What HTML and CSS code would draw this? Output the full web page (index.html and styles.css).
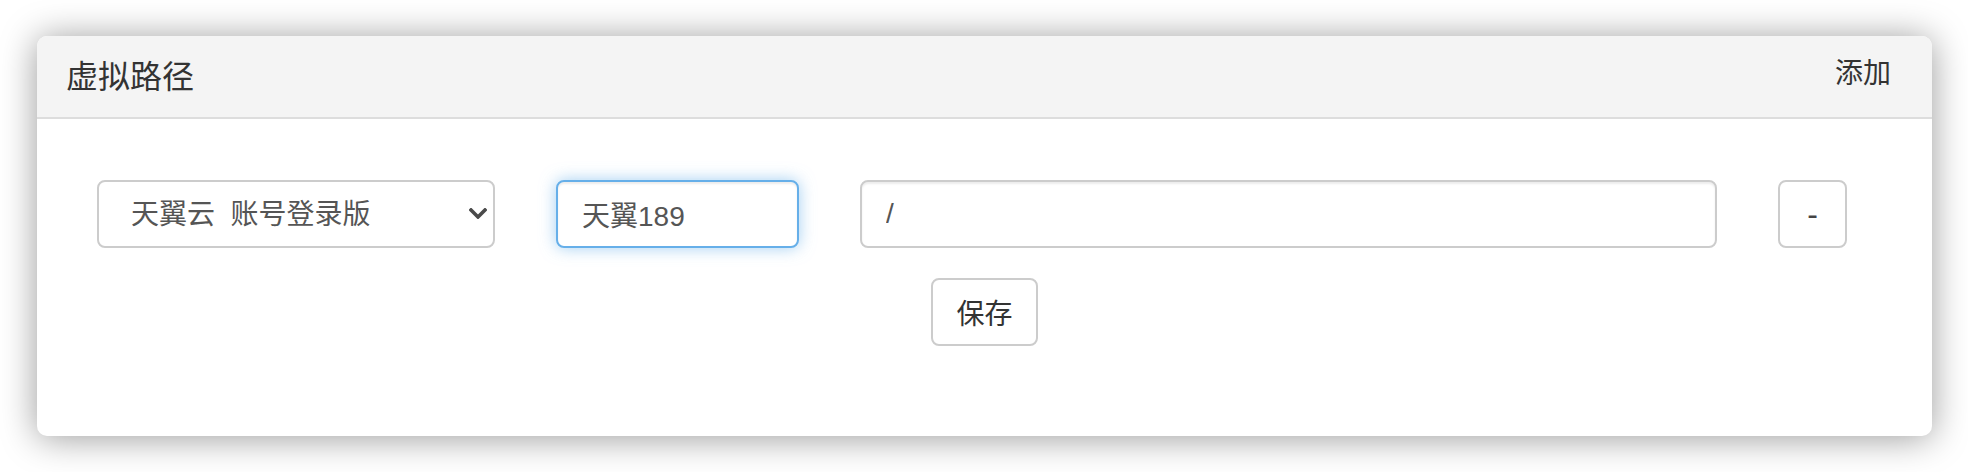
FILE: index.html
```html
<!DOCTYPE html>
<html lang="zh-CN">
<head>
<meta charset="utf-8">
<title>虚拟路径</title>
<link rel="stylesheet" href="styles.css">
</head>
<body>
<div class="panel">
  <div class="panel-heading">
    <span class="panel-title">虚拟路径</span>
    <button class="link-add" type="button">添加</button>
  </div>
  <div class="panel-body">
    <div class="path-row">
      <div class="select-wrap">
        <select class="form-control driver">
          <option>天翼云&nbsp;&nbsp;账号登录版</option>
        </select>
        <svg class="chevron" width="18" height="11" viewBox="0 0 18 11" aria-hidden="true">
          <path d="M2 2 L9 9 L16 2" fill="none" stroke="#4a4a4a" stroke-width="3.6" stroke-linecap="square" stroke-linejoin="miter"/>
        </svg>
      </div>
      <input class="form-control name is-focus" type="text" value="天翼189">
      <input class="form-control path" type="text" value="/">
      <button class="btn minus" type="button">-</button>
    </div>
    <div class="actions">
      <button class="btn save" type="button">保存</button>
    </div>
  </div>
</div>
</body>
</html>
```

FILE: styles.css
```css
html, body {
  margin: 0;
  background: #ffffff;
}

html {
  height: 100%;
}

body {
  box-sizing: border-box;
  min-height: 100%;
  padding: 36px 36px 36px 37px;
  font-family: "Liberation Sans", "Noto Sans CJK SC", sans-serif;
  color: #333333;
}

.panel {
  background: #ffffff;
  border-radius: 10px;
  box-shadow: 0 2px 36px rgba(0, 0, 0, 0.4);
  height: 400px;
  box-sizing: border-box;
  overflow: hidden;
}

.panel-heading {
  display: flex;
  align-items: center;
  justify-content: space-between;
  height: 81px;
  padding: 0 41px 0 29px;
  background: #f4f4f4;
  border-bottom: 2px solid #dddddd;
}

.panel-title {
  font-size: 32px;
  color: #333333;
  line-height: 1;
}

.link-add {
  font-family: inherit;
  font-size: 28px;
  color: #333333;
  background: none;
  border: 0;
  padding: 0 0 6px 0;
  line-height: 1;
  cursor: pointer;
}

.panel-body {
  padding: 61px 85px 0 60px;
}

.path-row {
  display: flex;
  align-items: center;
  gap: 61px;
}

.form-control {
  box-sizing: border-box;
  height: 68px;
  font-family: inherit;
  font-size: 28px;
  color: #555555;
  background: #ffffff;
  border: 2px solid #cccccc;
  border-radius: 8px;
  padding: 0 24px;
  box-shadow: inset 0 2px 2px rgba(0, 0, 0, 0.075);
  outline: none;
}

.select-wrap {
  position: relative;
  width: 398px;
  flex: none;
}

.driver {
  width: 100%;
  -webkit-appearance: none;
  appearance: none;
  padding-left: 32px;
  box-shadow: none;
}

.chevron {
  position: absolute;
  right: 8px;
  top: 28px;
}

.name {
  width: 243px;
  flex: none;
}

.is-focus {
  border-color: #66afe9;
  box-shadow: inset 0 2px 2px rgba(0, 0, 0, 0.075), 0 0 16px rgba(102, 175, 233, 0.6);
}

.path {
  width: 857px;
  flex: none;
}

.btn {
  box-sizing: border-box;
  height: 68px;
  font-family: inherit;
  font-size: 28px;
  color: #333333;
  background: #ffffff;
  border: 2px solid #cccccc;
  border-radius: 8px;
  cursor: pointer;
}

.minus {
  width: 69px;
  padding: 0;
  flex: none;
  font-size: 32px;
  color: #444444;
}

.actions {
  display: flex;
  justify-content: center;
  padding-top: 30px;
  margin-right: -25px;
}

.save {
  width: 107px;
  padding: 0;
}
```
